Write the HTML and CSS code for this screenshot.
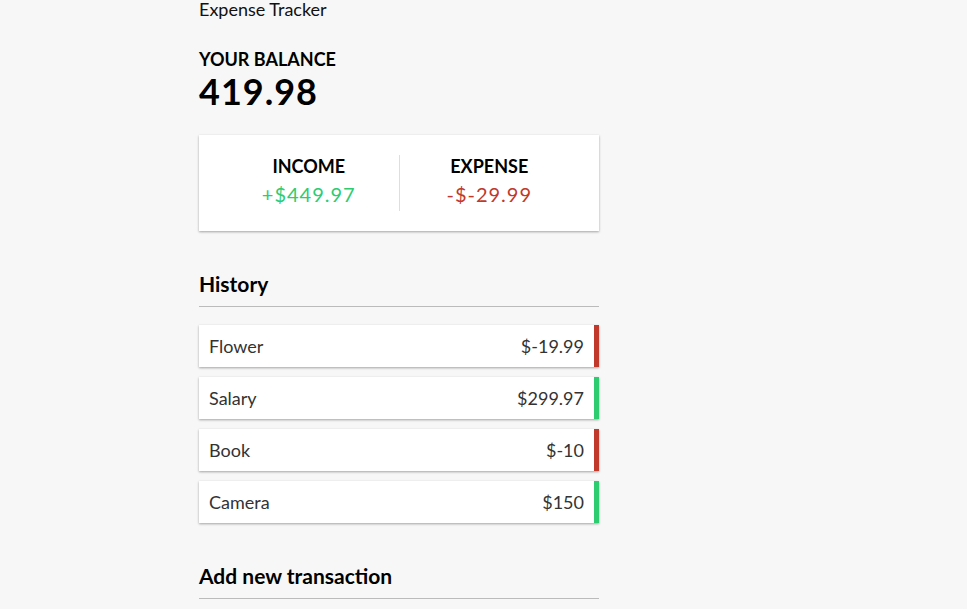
FILE: index.html
```html
<!DOCTYPE html>
<html lang="en">
<head>
<meta charset="UTF-8">
<title>Expense Tracker</title>
<link rel="stylesheet" href="styles.css">
</head>
<body>
  <div class="container">
    <div class="title">Expense Tracker</div>
    <h4 class="balance-label">Your Balance</h4>
    <h1 class="balance">419.98</h1>
    <div class="inc-exp-container">
      <div class="inc-exp-col">
        <h4>Income</h4>
        <p class="money plus">+$449.97</p>
      </div>
      <div class="inc-exp-col">
        <h4>Expense</h4>
        <p class="money minus">-$-29.99</p>
      </div>
    </div>
    <h3 class="section-title">History</h3>
    <ul class="list">
      <li class="minus"><span>Flower</span><span>$-19.99</span></li>
      <li class="plus"><span>Salary</span><span>$299.97</span></li>
      <li class="minus"><span>Book</span><span>$-10</span></li>
      <li class="plus"><span>Camera</span><span>$150</span></li>
    </ul>
    <h3 class="section-title">Add new transaction</h3>
  </div>
</body>
</html>
```

FILE: styles.css
```css
* { box-sizing: border-box; }

body {
  background-color: #f7f7f7;
  margin: 0;
  font-family: Lato, "Noto Sans", sans-serif;
  font-size: 18px;
  color: #000;
  overflow: hidden;
}

.container {
  width: 400px;
  margin: 0 0 0 199px;
}

.title {
  font-size: 18px;
  line-height: 18px;
  color: #111;
}

h4 {
  margin: 0;
  text-transform: uppercase;
  font-size: 18px;
  line-height: 22px;
}

.balance-label {
  margin-top: 30px;
}

h1.balance {
  font-size: 36px;
  line-height: 43px;
  letter-spacing: 1px;
  margin: 0;
}

.inc-exp-container {
  background-color: #fff;
  box-shadow: 0 1px 3px rgba(0, 0, 0, 0.12), 0 1px 2px rgba(0, 0, 0, 0.24);
  padding: 20px;
  display: flex;
  justify-content: space-between;
  margin: 22px 0 20px;
}

.inc-exp-col {
  flex: 1;
  text-align: center;
}

.inc-exp-col:first-child {
  border-right: 1px solid #dedede;
}

.money {
  font-size: 20px;
  line-height: 24px;
  letter-spacing: 1px;
  margin: 5px 0;
}

.money.plus { color: #2ecc71; }
.money.minus { color: #c0392b; }

.section-title {
  font-size: 21px;
  line-height: 25px;
  border-bottom: 1px solid #bbb;
  padding-bottom: 10px;
  margin: 40px 0 10px;
}

.list {
  list-style-type: none;
  padding: 0;
  margin: 18px 0 40px;
}

.list li {
  background-color: #fff;
  box-shadow: 0 1px 3px rgba(0, 0, 0, 0.12), 0 1px 2px rgba(0, 0, 0, 0.24);
  color: #333;
  display: flex;
  justify-content: space-between;
  padding: 10px;
  margin: 10px 0;
  line-height: 22px;
}

.list li.plus { border-right: 5px solid #2ecc71; }
.list li.minus { border-right: 5px solid #c0392b; }
```
